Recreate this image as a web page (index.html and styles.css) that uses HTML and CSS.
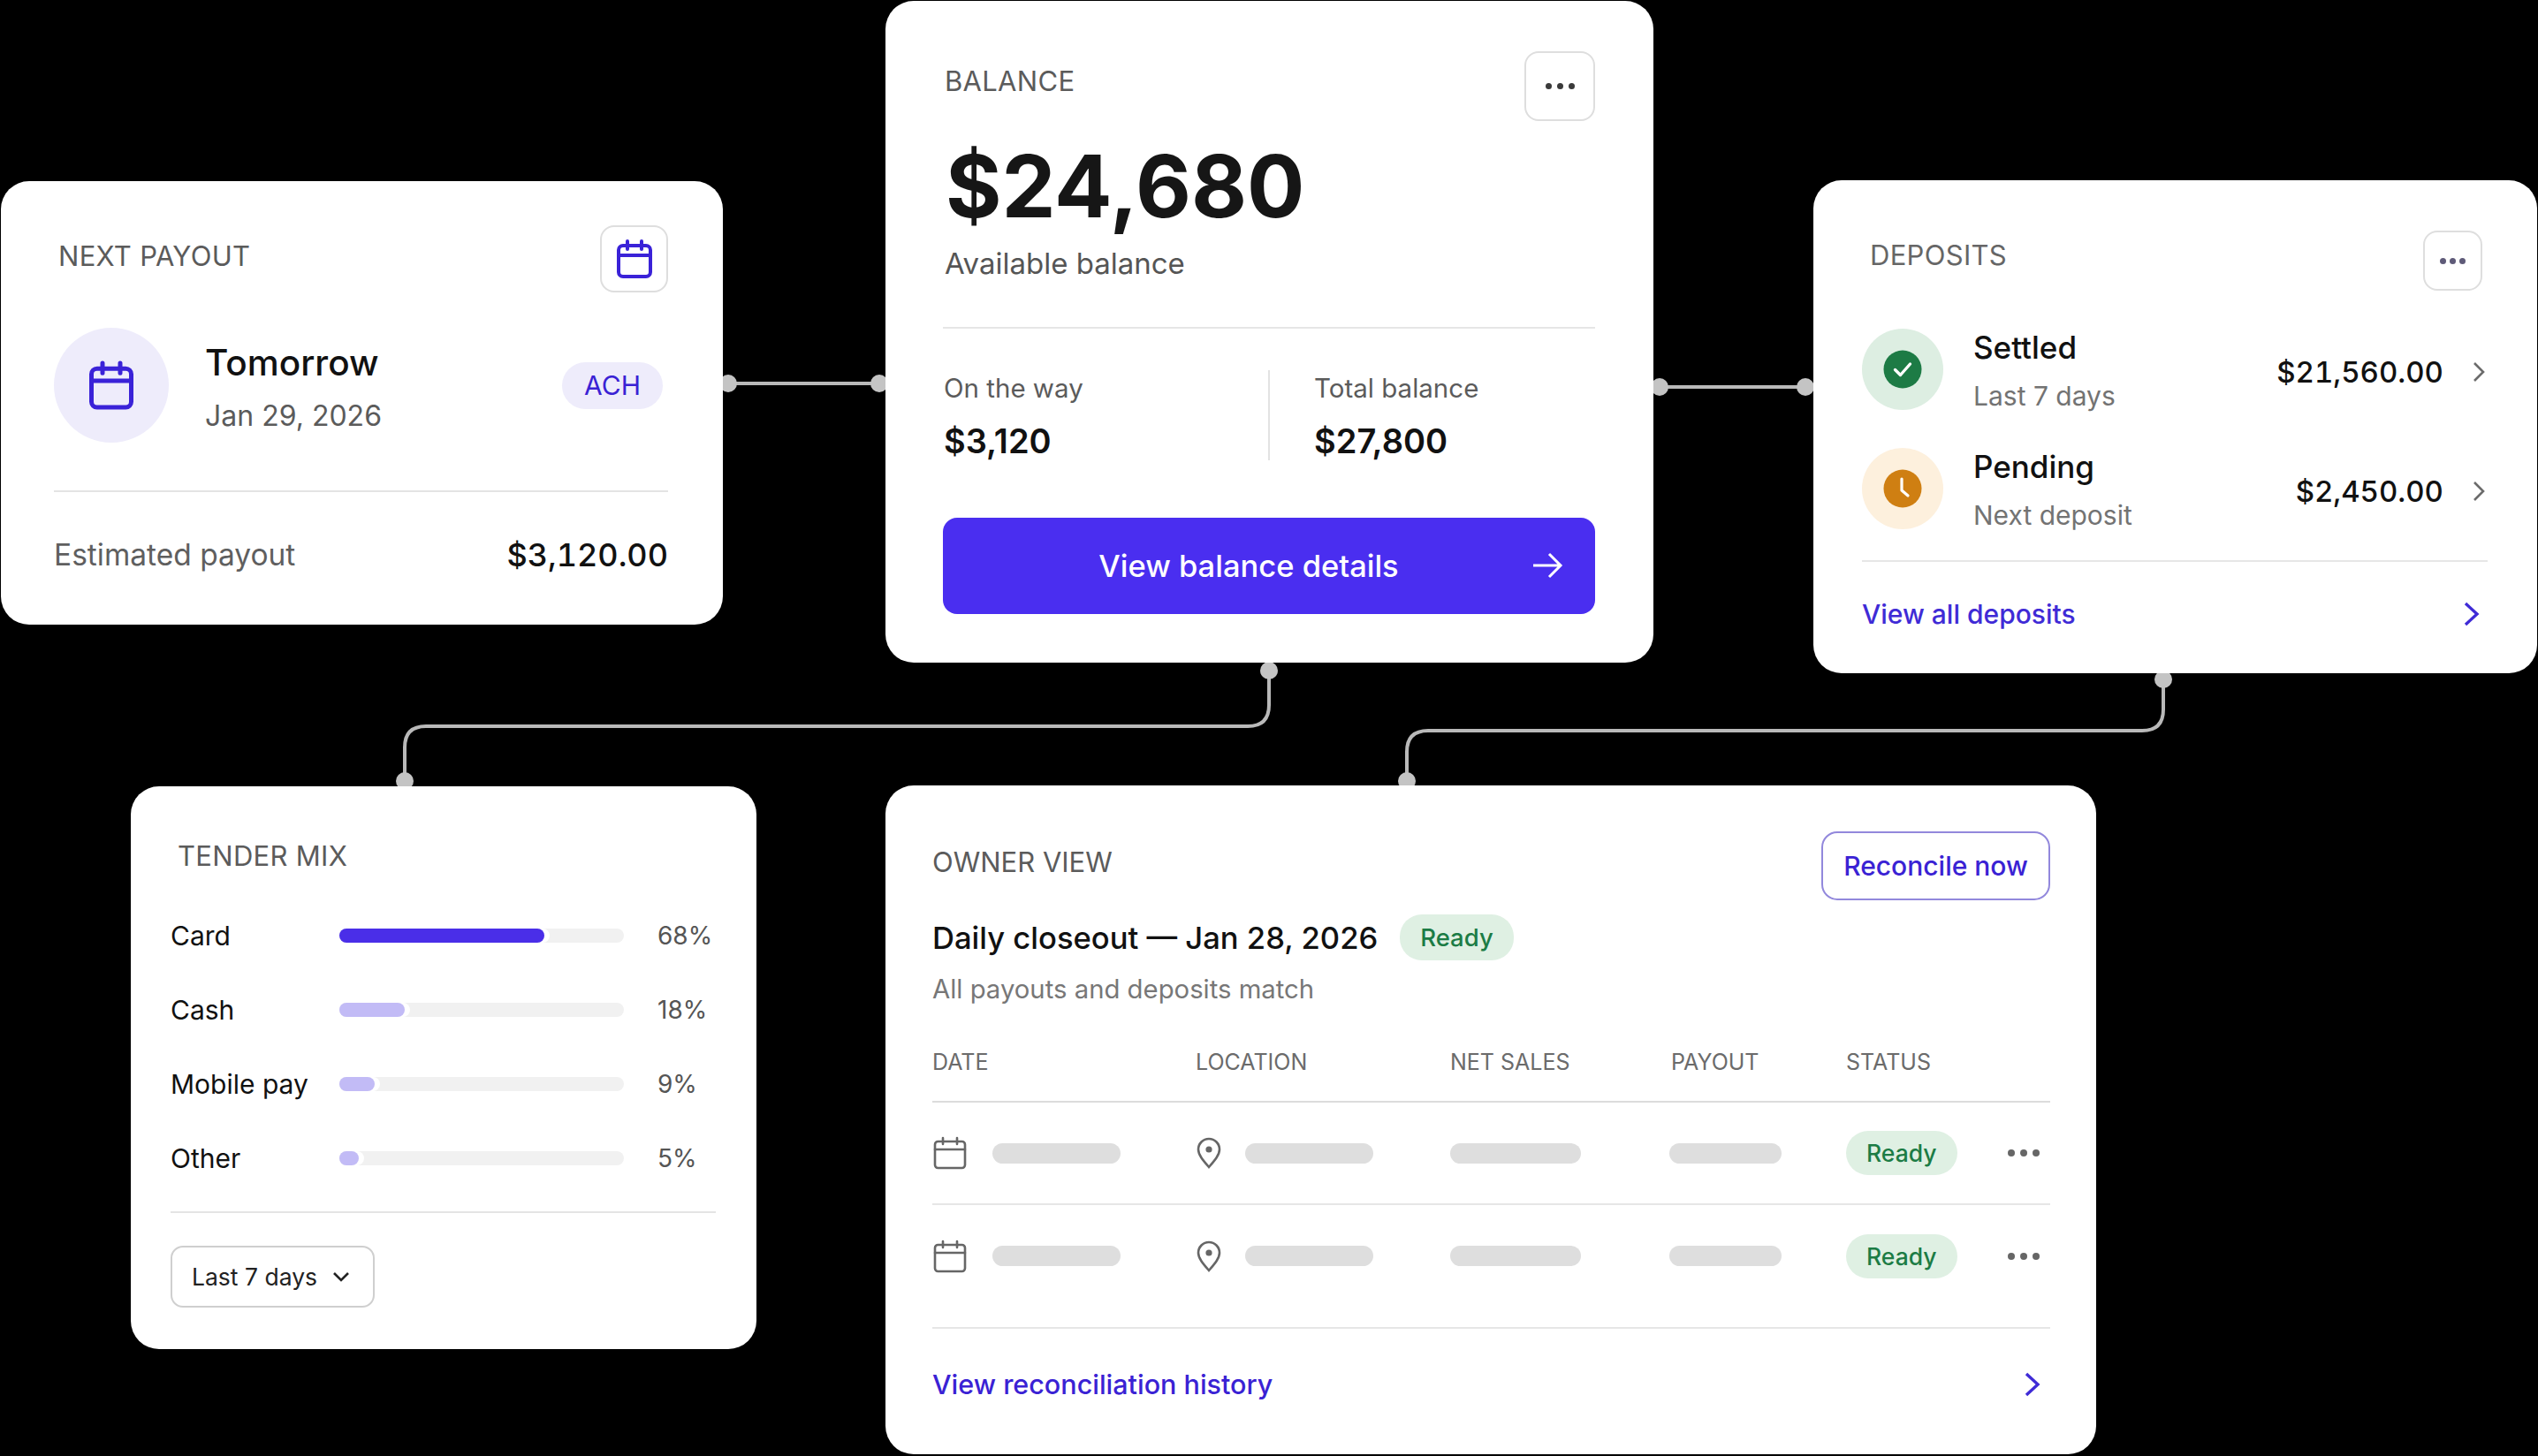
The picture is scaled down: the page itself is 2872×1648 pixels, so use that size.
FILE: index.html
```html
<!DOCTYPE html>
<html lang="en">
<head>
    <meta charset="UTF-8">
    <meta name="viewport" content="width=device-width, initial-scale=1.0">
    <title>Payments overview</title>
    <link rel="stylesheet" href="styles.css">
</head>
<body>
    <div class="stage">
        <svg class="wires" width="2872" height="1648" viewBox="0 0 2872 1648" fill="none">
            <path d="M824 434H995"/>
            <path d="M1878 438H2043"/>
            <path d="M1436 759V798Q1436 822 1412 822H482Q458 822 458 846V884"/>
            <path d="M2448 769V803Q2448 827 2424 827H1616Q1592 827 1592 851V884"/>
            <g class="wire-dots">
                <ellipse cx="824" cy="434" rx="10" ry="10"/>
                <ellipse cx="995" cy="434" rx="10" ry="10"/>
                <ellipse cx="1878" cy="438" rx="10" ry="10"/>
                <ellipse cx="2043" cy="438" rx="10" ry="10"/>
                <ellipse cx="1436" cy="759" rx="10" ry="10"/>
                <ellipse cx="458" cy="884" rx="10" ry="10"/>
                <ellipse cx="2448" cy="769" rx="10" ry="10"/>
                <ellipse cx="1592" cy="884" rx="10" ry="10"/>
            </g>
        </svg>

        <!-- next payout -->
        <section class="card payout">
            <div class="card-head">
                <h2 class="card-title">NEXT PAYOUT</h2>
                <div class="icon-btn">
                    <svg class="cal" width="48" height="48" viewBox="0 0 24 24"><rect x="3" y="4.5" width="18" height="17.5" rx="2.5"/><path d="M3 10h18M8 2v4.5M16 2v4.5"/></svg>
                </div>
            </div>
            <div class="payout-main">
                <div class="payout-circle">
                    <svg class="cal" width="60" height="60" viewBox="0 0 24 24"><rect x="3" y="4.5" width="18" height="17.5" rx="2.5"/><path d="M3 10h18M8 2v4.5M16 2v4.5"/></svg>
                </div>
                <div class="payout-text">
                    <div class="payout-name">Tomorrow</div>
                    <div class="payout-date">Jan 29, 2026</div>
                </div>
                <span class="ach">ACH</span>
            </div>
            <div class="payout-foot">
                <span class="payout-label">Estimated payout</span>
                <span class="payout-amount">$3,120.00</span>
            </div>
        </section>

        <!-- balance -->
        <section class="card balance">
            <div class="card-head">
                <h2 class="card-title">BALANCE</h2>
                <div class="icon-btn"><span class="dots"><i></i><i></i><i></i></span></div>
            </div>
            <div class="balance-total">$24,680</div>
            <div class="balance-sub">Available balance</div>
            <div class="balance-stats">
                <div class="stat">
                    <div class="stat-label">On the way</div>
                    <div class="stat-value">$3,120</div>
                </div>
                <div class="stat stat-right">
                    <div class="stat-label">Total balance</div>
                    <div class="stat-value">$27,800</div>
                </div>
            </div>
            <div class="primary-btn">
                <span>View balance details</span>
                <svg class="primary-arrow" width="36" height="32" viewBox="0 0 36 32"><path d="M2 16h31M20 3l13 13-13 13"/></svg>
            </div>
        </section>

        <!-- deposits -->
        <section class="card deposits">
            <div class="card-head">
                <h2 class="card-title">DEPOSITS</h2>
                <div class="icon-btn"><span class="dots dots-muted"><i></i><i></i><i></i></span></div>
            </div>
            <div class="deposit-row">
                <div class="deposit-circle green">
                    <svg width="44" height="44" viewBox="0 0 44 44"><circle cx="22" cy="22" r="21.5" fill="#1d7b45"/><path d="M13.5 22.5l6 6 11-12.5" fill="none" stroke="#fff" stroke-width="3.4" stroke-linecap="round" stroke-linejoin="round"/></svg>
                </div>
                <div class="deposit-text">
                    <div class="deposit-name">Settled</div>
                    <div class="deposit-note">Last 7 days</div>
                </div>
                <div class="deposit-amount">$21,560.00</div>
                <svg class="chev" width="16" height="26" viewBox="0 0 16 26"><path d="M3 3l10 10L3 23"/></svg>
            </div>
            <div class="deposit-row">
                <div class="deposit-circle amber">
                    <svg width="44" height="44" viewBox="0 0 44 44"><circle cx="22" cy="22" r="21.5" fill="#cf7f12"/><path d="M21 11v13l7 6" fill="none" stroke="#fff" stroke-width="3.2" stroke-linecap="round" stroke-linejoin="round"/></svg>
                </div>
                <div class="deposit-text">
                    <div class="deposit-name">Pending</div>
                    <div class="deposit-note">Next deposit</div>
                </div>
                <div class="deposit-amount">$2,450.00</div>
                <svg class="chev" width="16" height="26" viewBox="0 0 16 26"><path d="M3 3l10 10L3 23"/></svg>
            </div>
            <div class="link-row deposits-link">
                <span>View all deposits</span>
                <svg class="chev-link" width="20" height="28" viewBox="0 0 20 28"><path d="M3 2l13 12L3 26"/></svg>
            </div>
        </section>

        <!-- tender mix -->
        <section class="card tender">
            <h2 class="card-title">TENDER MIX</h2>
            <div class="mix-list">
                <div class="mix-row">
                    <span class="mix-name">Card</span>
                    <div class="mix-track"><div class="mix-fill" style="width: 232px"></div></div>
                    <span class="mix-pct">68%</span>
                </div>
                <div class="mix-row">
                    <span class="mix-name">Cash</span>
                    <div class="mix-track"><div class="mix-fill light" style="width: 74px"></div></div>
                    <span class="mix-pct">18%</span>
                </div>
                <div class="mix-row">
                    <span class="mix-name">Mobile pay</span>
                    <div class="mix-track"><div class="mix-fill light" style="width: 40px"></div></div>
                    <span class="mix-pct">9%</span>
                </div>
                <div class="mix-row">
                    <span class="mix-name">Other</span>
                    <div class="mix-track"><div class="mix-fill light" style="width: 22px"></div></div>
                    <span class="mix-pct">5%</span>
                </div>
            </div>
            <div class="range-select">
                <span>Last 7 days</span>
                <svg width="20" height="12" viewBox="0 0 20 12"><path d="M2 2l8 8 8-8"/></svg>
            </div>
        </section>

        <!-- owner view -->
        <section class="card owner">
            <div class="owner-head">
                <h2 class="card-title">OWNER VIEW</h2>
                <div class="outline-btn">Reconcile now</div>
            </div>
            <div class="owner-title">
                <span>Daily closeout — Jan 28, 2026</span>
                <span class="ready ready-big">Ready</span>
            </div>
            <div class="owner-sub">All payouts and deposits match</div>
            <div class="table-row table-head">
                <span>DATE</span>
                <span>LOCATION</span>
                <span>NET SALES</span>
                <span>PAYOUT</span>
                <span>STATUS</span>
            </div>
            <div class="table-row table-line">
                <div class="cell">
                    <svg class="row-icon" width="38" height="38" viewBox="0 0 38 38"><rect x="2" y="6" width="34" height="30" rx="3.5"/><path d="M2 15h34M11 2v7M27 2v7"/></svg>
                    <i class="skeleton"></i>
                </div>
                <div class="cell">
                    <svg class="row-icon pin" width="28" height="36" viewBox="0 0 28 36"><path d="M14 34C7 26 2 20 2 14a12 12 0 0 1 24 0c0 6-5 12-12 20z"/><circle cx="14" cy="14" r="3.6"/></svg>
                    <i class="skeleton"></i>
                </div>
                <div class="cell"><i class="skeleton wide"></i></div>
                <div class="cell"><i class="skeleton short"></i></div>
                <div class="cell status-cell">
                    <span class="ready">Ready</span>
                    <span class="dots dots-row"><i></i><i></i><i></i></span>
                </div>
            </div>
            <div class="table-row table-line">
                <div class="cell">
                    <svg class="row-icon" width="38" height="38" viewBox="0 0 38 38"><rect x="2" y="6" width="34" height="30" rx="3.5"/><path d="M2 15h34M11 2v7M27 2v7"/></svg>
                    <i class="skeleton"></i>
                </div>
                <div class="cell">
                    <svg class="row-icon pin" width="28" height="36" viewBox="0 0 28 36"><path d="M14 34C7 26 2 20 2 14a12 12 0 0 1 24 0c0 6-5 12-12 20z"/><circle cx="14" cy="14" r="3.6"/></svg>
                    <i class="skeleton"></i>
                </div>
                <div class="cell"><i class="skeleton wide"></i></div>
                <div class="cell"><i class="skeleton short"></i></div>
                <div class="cell status-cell">
                    <span class="ready">Ready</span>
                    <span class="dots dots-row"><i></i><i></i><i></i></span>
                </div>
            </div>
            <div class="link-row owner-link">
                <span>View reconciliation history</span>
                <svg class="chev-link" width="20" height="30" viewBox="0 0 20 30"><path d="M3 3l13 12L3 27"/></svg>
            </div>
        </section>
    </div>
</body>
</html>
```

FILE: styles.css
```css
body, html {
    margin: 0;
    padding: 0;
    background: #000;
    font-family: 'Inter', 'Liberation Sans', sans-serif;
    color: #141414;
}

.stage {
    position: relative;
    width: 2872px;
    height: 1648px;
    overflow: hidden;
}

.wires {
    position: absolute;
    top: 0;
    left: 0;
}

.wires path {
    stroke: #b9b9b9;
    stroke-width: 4;
}

.wire-dots ellipse {
    fill: #c4c4c4;
}

.card {
    position: absolute;
    box-sizing: border-box;
    background: #fff;
    border-radius: 32px;
}

.card-head {
    display: flex;
    justify-content: space-between;
    align-items: center;
}

.card-title {
    margin: 0;
    font-size: 31px;
    line-height: 40px;
    font-weight: 400;
    letter-spacing: 0.3px;
    color: #5b5b5b;
}

.icon-btn {
    display: flex;
    justify-content: center;
    align-items: center;
    box-sizing: border-box;
    border: 2px solid #dedede;
    border-radius: 16px;
    background: #fff;
}

.cal {
    fill: none;
    stroke: #3a22d8;
    stroke-width: 2;
    stroke-linecap: round;
}

.dots {
    display: flex;
    gap: 6px;
}

.dots i {
    width: 7px;
    height: 7px;
    border-radius: 50%;
    background: #3a3a3a;
}

.dots-muted i {
    background: #5e5a78;
}

/* next payout */
.payout {
    left: 1px;
    top: 205px;
    width: 817px;
    height: 502px;
    padding: 50px 62px 0 60px;
}

.payout .card-title {
    margin: -6px 0 0 5px;
}

.payout .icon-btn {
    width: 77px;
    height: 76px;
}

.payout-main {
    display: flex;
    margin-top: 40px;
    height: 130px;
    padding-bottom: 54px;
    border-bottom: 2px solid #e4e4e4;
}

.payout-circle {
    display: flex;
    justify-content: center;
    align-items: center;
    width: 130px;
    height: 130px;
    border-radius: 50%;
    background: #eeecfb;
}

.payout-text {
    margin: 16px 0 0 41px;
}

.payout-name {
    font-size: 40.5px;
    line-height: 48px;
    font-weight: 500;
    color: #111;
}

.payout-date {
    margin-top: 14px;
    font-size: 32px;
    line-height: 44px;
    color: #5b5b5b;
}

.ach {
    align-self: center;
    margin-left: auto;
    margin-right: 6px;
    padding: 0 25px;
    height: 53px;
    line-height: 53px;
    border-radius: 27px;
    background: #eeecfb;
    color: #3a22d4;
    font-size: 30px;
}

.payout-foot {
    display: flex;
    justify-content: space-between;
    margin-top: 49px;
    line-height: 44px;
}

.payout-label {
    font-size: 33.5px;
    color: #5f5f5f;
}

.payout-amount {
    font-size: 36px;
    font-weight: 500;
    font-variant-numeric: tabular-nums;
    color: #111;
}

/* balance */
.balance {
    left: 1002px;
    top: 1px;
    width: 869px;
    height: 749px;
    padding: 57px 66px 0 65px;
}

.balance .card-title {
    margin: -12px 0 0 2px;
}

.balance .icon-btn {
    width: 80px;
    height: 79px;
}

.balance-total {
    margin: 14px 0 0 3px;
    font-size: 97px;
    line-height: 120px;
    font-weight: 700;
    color: #161616;
}

.balance-sub {
    margin: 5px 0 0 2px;
    font-size: 33px;
    line-height: 44px;
    color: #555;
}

.balance-stats {
    display: grid;
    grid-template-columns: 368px 1fr;
    margin-top: 50px;
    padding-top: 47px;
    border-top: 2px solid #e6e6e6;
}

.stat {
    height: 102px;
    padding-left: 1px;
}

.stat-right {
    padding-left: 50px;
    border-left: 2px solid #e2e2e2;
}

.stat-label {
    font-size: 29.5px;
    line-height: 40px;
    color: #5b5b5b;
}

.stat-value {
    margin-top: 18px;
    font-size: 38px;
    line-height: 44px;
    font-weight: 600;
    color: #111;
}

.primary-btn {
    position: relative;
    display: flex;
    justify-content: center;
    align-items: center;
    margin-top: 65px;
    height: 109px;
    padding-right: 46px;
    border-radius: 16px;
    background: #4a2ef0;
    color: #fff;
    font-size: 34.5px;
    font-weight: 500;
}

.primary-arrow {
    position: absolute;
    right: 36px;
    top: 38px;
    fill: none;
    stroke: #fff;
    stroke-width: 3;
}

/* deposits */
.deposits {
    left: 2052px;
    top: 204px;
    width: 819px;
    height: 558px;
    padding: 57px 56px 0 55px;
}

.deposits .card-title {
    margin: -12px 0 0 9px;
    color: #666;
}

.deposits .icon-btn {
    width: 67px;
    height: 68px;
    margin-right: 6px;
}

.deposits .dots {
    gap: 4px;
}

.deposit-row {
    display: flex;
    align-items: center;
    height: 93px;
    margin-top: 42px;
}

.deposit-circle {
    display: flex;
    justify-content: center;
    align-items: center;
    width: 92px;
    height: 92px;
    border-radius: 50%;
}

.green {
    background: #ddeee2;
}

.amber {
    background: #fdf0dd;
}

.deposit-text {
    margin: 3px 0 0 34px;
}

.deposit-name {
    font-size: 35px;
    line-height: 44px;
    font-weight: 500;
    color: #111;
}

.deposit-note {
    margin-top: 13px;
    font-size: 30px;
    line-height: 40px;
    color: #737373;
}

.deposit-amount {
    margin-left: auto;
    margin-top: 6px;
    font-size: 33px;
    font-weight: 500;
    font-variant-numeric: tabular-nums;
    color: #111;
}

.chev {
    margin: 6px 2px 0 32px;
    fill: none;
    stroke: #6b6b6b;
    stroke-width: 2.6;
}

.link-row {
    display: flex;
    justify-content: space-between;
    align-items: center;
    font-weight: 500;
    color: #3f2bd6;
}

.chev-link {
    fill: none;
    stroke: #3f2bd6;
    stroke-width: 3.4;
}

.deposits-link {
    margin-top: 35px;
    padding: 37px 8px 0 0;
    border-top: 2px solid #e6e6e6;
    font-size: 30px;
    line-height: 44px;
}

/* tender mix */
.tender {
    left: 148px;
    top: 890px;
    width: 708px;
    height: 637px;
    padding: 59px 46px 0 45px;
}

.tender .card-title {
    margin-left: 8px;
}

.mix-list {
    margin-top: 28px;
    padding-bottom: 18px;
    border-bottom: 2px solid #e4e4e4;
}

.mix-row {
    display: grid;
    grid-template-columns: 191px 322px 1fr;
    align-items: center;
    height: 84px;
}

.mix-name {
    font-size: 30px;
    color: #111;
}

.mix-track {
    height: 16px;
    border-radius: 8px;
    background: #f1f1f1;
}

.mix-fill {
    height: 100%;
    border-radius: 8px;
    background: #4a2ee8;
    box-shadow: 6px 0 0 #fff;
}

.mix-fill.light {
    background: #c2bbf6;
}

.mix-pct {
    padding-left: 38px;
    font-size: 28px;
    color: #555;
}

.range-select {
    display: flex;
    align-items: center;
    justify-content: space-between;
    box-sizing: border-box;
    width: 231px;
    height: 70px;
    margin-top: 37px;
    padding: 0 26px 0 22px;
    border: 2px solid #cfcfcf;
    border-radius: 14px;
    font-size: 26.5px;
    color: #222;
}

.range-select svg {
    fill: none;
    stroke: #222;
    stroke-width: 2.6;
}

/* owner view */
.owner {
    left: 1002px;
    top: 889px;
    width: 1370px;
    height: 757px;
    padding: 52px 52px 0 53px;
}

.owner-head {
    display: flex;
    justify-content: space-between;
    align-items: flex-start;
}

.owner-head .card-title {
    margin-top: 15px;
    letter-spacing: 0;
}

.outline-btn {
    box-sizing: border-box;
    width: 259px;
    height: 78px;
    line-height: 74px;
    text-align: center;
    border: 2px solid #9288dc;
    border-radius: 18px;
    font-size: 30px;
    font-weight: 500;
    color: #3a22d4;
}

.owner-title {
    display: flex;
    align-items: center;
    gap: 25px;
    height: 54px;
    margin-top: 15px;
    font-size: 34.6px;
    font-weight: 500;
    color: #111;
}

.owner-sub {
    margin-top: 12px;
    font-size: 29.3px;
    line-height: 40px;
    color: #777;
}

.table-row {
    display: grid;
    grid-template-columns: 298px 288px 250px 198px 1fr;
}

.table-head {
    margin-top: 42px;
    padding-bottom: 24px;
    border-bottom: 2px solid #dcdcdc;
    font-size: 25px;
    line-height: 40px;
    color: #6b6b6b;
}

.table-line {
    box-sizing: border-box;
    height: 116px;
    border-bottom: 2px solid #e6e6e6;
}

.table-line + .table-line {
    height: 140px;
    padding-bottom: 23px;
}

.cell {
    display: flex;
    align-items: center;
}

.row-icon {
    margin-left: 1px;
    fill: none;
    stroke: #666;
    stroke-width: 2.6;
    stroke-linecap: round;
}

.pin {
    margin-right: 27px;
}

.pin circle {
    fill: #666;
    stroke: none;
}

.skeleton {
    display: block;
    width: 145px;
    height: 23px;
    margin-left: 29px;
    border-radius: 12px;
    background: #dedede;
}

.pin + .skeleton {
    margin-left: 0;
}

.skeleton.wide {
    width: 148px;
    margin-left: 0;
}

.skeleton.short {
    width: 127px;
    margin-left: -2px;
}

.status-cell {
    justify-content: space-between;
    padding-right: 12px;
}

.ready {
    display: inline-block;
    height: 50px;
    line-height: 50px;
    padding: 0 23px;
    border-radius: 25px;
    background: #dff0e3;
    color: #1c7c45;
    font-size: 26.5px;
    font-weight: 500;
}

.ready-big {
    height: 52px;
    line-height: 52px;
    padding: 0 23px;
    font-size: 27.5px;
}

.dots-row {
    gap: 6px;
}

.dots-row i {
    width: 8px;
    height: 8px;
    background: #666;
}

.owner-link {
    margin-top: 41px;
    padding-right: 10px;
    font-size: 30.5px;
    line-height: 44px;
    color: #3a22d4;
}
```
